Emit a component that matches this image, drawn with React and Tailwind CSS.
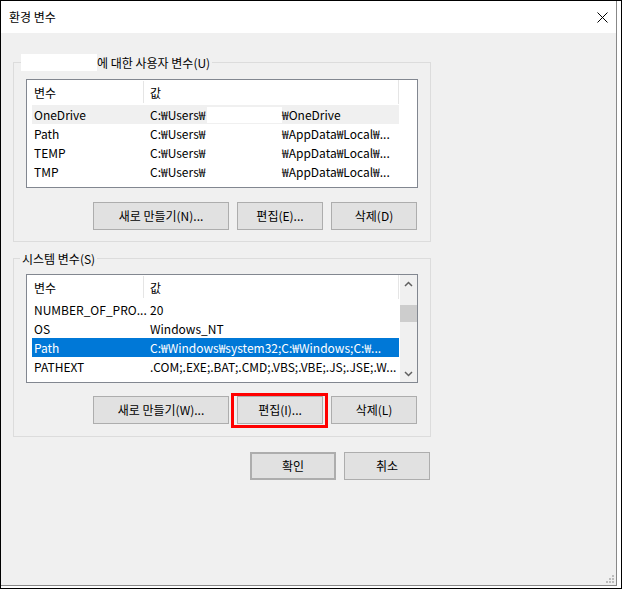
import React from "react";

const FONT = "font-['Noto_Sans_CJK_KR','Noto_Sans',sans-serif]";

function Btn({ children, className = "" }) {
  return (
    <div
      className={`flex items-center justify-center h-[28px] bg-[#e1e1e1] border border-[#adadad] text-[12px] leading-[16px] text-black ${className}`}
    >
      {children}
    </div>
  );
}

function Chevron({ up }) {
  return (
    <svg width="9" height="6" viewBox="0 0 9 6">
      <path
        d={up ? "M1 5 L4.5 1.5 L8 5" : "M1 1 L4.5 4.5 L8 1"}
        fill="none"
        stroke="#606060"
        strokeWidth="1.5"
      />
    </svg>
  );
}

function Scrollbar() {
  return (
    <div className="w-[17px] h-full bg-[#f0f0f0] flex flex-col shrink-0">
      <div className="h-[17px] flex items-center justify-center">
        <Chevron up />
      </div>
      <div className="flex-1 flex flex-col pt-[13px]">
        <div className="h-[17px] bg-[#cdcdcd]" />
      </div>
      <div className="h-[17px] flex items-center justify-center">
        <Chevron />
      </div>
    </div>
  );
}

function Row({ name, value, bg = "", text = "text-black" }) {
  return (
    <div className={`flex h-[19px] w-[367px] items-center ${bg} ${text}`}>
      <div className="w-[112px] shrink-0 pl-[2px] whitespace-nowrap leading-[19px]">{name}</div>
      <div className="w-[255px] shrink-0 pl-[6px] whitespace-nowrap leading-[19px] flex">{value}</div>
    </div>
  );
}

function Header() {
  return (
    <div className="flex h-[25px] w-[367px]">
      <div className="w-[111px] pl-[2px] leading-[25px]">변수</div>
      <div className="w-px h-[22px] mt-[1px] bg-[#e5e5e5]" />
      <div className="w-[254px] pl-[6px] leading-[25px]">값</div>
      <div className="w-px h-[24px] bg-[#e5e5e5]" />
    </div>
  );
}

function UserValue({ rest, redact }) {
  return (
    <>
      <div className="w-[132px] flex justify-between items-center shrink-0">
        <span>C:₩Users₩</span>
        {redact ? <span className="inline-block w-[75px] h-[16px] bg-white" /> : null}
      </div>
      <span>{rest}</span>
    </>
  );
}

export default function App() {
  return (
    <div className={`${FONT} text-[12px] text-black w-[622px] h-[589px] border border-black bg-white pr-[4px] pb-[2px] flex`}>
      <div className="relative flex-1 flex flex-col border-r border-b border-[#888888] bg-[#f0f0f0]">
        {/* title bar */}
        <div className="h-[32px] bg-white flex items-center justify-between pl-[8px] pr-[8px] shrink-0">
          <span className="leading-[16px]">환경 변수</span>
          <svg width="11" height="11" viewBox="0 0 11 11">
            <path d="M0.5 0.5 L10.5 10.5 M10.5 0.5 L0.5 10.5" stroke="#000" strokeWidth="1" />
          </svg>
        </div>

        {/* body */}
        <div className="pl-[12px] pt-[21px] flex flex-col w-[430px]">
          {/* user variables */}
          <fieldset className="w-[418px] border border-[#dcdcdc] m-0 p-0 pb-[11px]">
            <legend className="ml-[7px] p-0">
              <div className="flex items-center h-[17px]">
                <span className="inline-block w-[76px] h-[17px] bg-white" />
                <span className="pr-[2px] leading-[17px]">에 대한 사용자 변수(U)</span>
              </div>
            </legend>
            <div className="pt-[8px] px-[12px] flex flex-col">
              <div className="h-[109px] border border-[#828790] bg-white flex">
                <div className="flex-1 pl-[5px] flex flex-col">
                  <Header />
                  <Row name="OneDrive" bg="bg-[#f0f0f0]" value={<UserValue rest="₩OneDrive" redact />} />
                  <Row name="Path" value={<UserValue rest="₩AppData₩Local₩..." />} />
                  <Row name="TEMP" value={<UserValue rest="₩AppData₩Local₩..." />} />
                  <Row name="TMP" value={<UserValue rest="₩AppData₩Local₩..." />} />
                </div>
              </div>
              <div className="flex justify-end gap-[8px] mt-[14px] pr-[1px]">
                <Btn className="w-[136px]">새로 만들기(N)...</Btn>
                <Btn className="w-[86px]">편집(E)...</Btn>
                <Btn className="w-[86px]">삭제(D)</Btn>
              </div>
            </div>
          </fieldset>

          {/* system variables */}
          <fieldset className="w-[418px] border border-[#dcdcdc] m-0 p-0 pb-[12px] mt-[8px]">
            <legend className="ml-[6px] p-0">
              <div className="flex items-center h-[17px] px-[2px]">
                <span className="leading-[17px]">시스템 변수(S)</span>
              </div>
            </legend>
            <div className="pt-[7px] px-[12px] flex flex-col">
              <div className="h-[109px] border border-[#828790] bg-white flex">
                <div className="flex-1 pl-[5px] flex flex-col">
                  <Header />
                  <Row name="NUMBER_OF_PRO..." value="20" />
                  <Row name="OS" value="Windows_NT" />
                  <Row
                    name="Path"
                    bg="bg-[#0078d7]"
                    text="text-white"
                    value="C:₩Windows₩system32;C:₩Windows;C:₩..."
                  />
                  <Row name="PATHEXT" value=".COM;.EXE;.BAT;.CMD;.VBS;.VBE;.JS;.JSE;.W..." />
                </div>
                <Scrollbar />
              </div>
              <div className="flex justify-end gap-[8px] mt-[13px] pr-[1px]">
                <Btn className="w-[136px]">새로 만들기(W)...</Btn>
                <div className="relative">
                  <Btn className="w-[86px]">편집(I)...</Btn>
                  <div className="absolute left-[-6px] top-[-3px] w-[97px] h-[35px] border-[3px] border-[#ff0000]" />
                </div>
                <Btn className="w-[86px]">삭제(L)</Btn>
              </div>
            </div>
          </fieldset>

          {/* OK / Cancel */}
          <div className="flex justify-end gap-[8px] mt-[15px] pr-[1px]">
            <Btn className="w-[86px] border-2 border-[#0078d7]">확인</Btn>
            <Btn className="w-[86px]">취소</Btn>
          </div>
        </div>

        {/* size grip */}
        <svg className="absolute right-[2px] bottom-[2px]" width="8" height="8" viewBox="0 0 8 8">
          <rect x="6" y="0" width="2" height="2" fill="#bcbcbc" />
          <rect x="3" y="3" width="2" height="2" fill="#bcbcbc" />
          <rect x="6" y="3" width="2" height="2" fill="#bcbcbc" />
          <rect x="0" y="6" width="2" height="2" fill="#bcbcbc" />
          <rect x="3" y="6" width="2" height="2" fill="#bcbcbc" />
          <rect x="6" y="6" width="2" height="2" fill="#bcbcbc" />
        </svg>
      </div>
    </div>
  );
}
